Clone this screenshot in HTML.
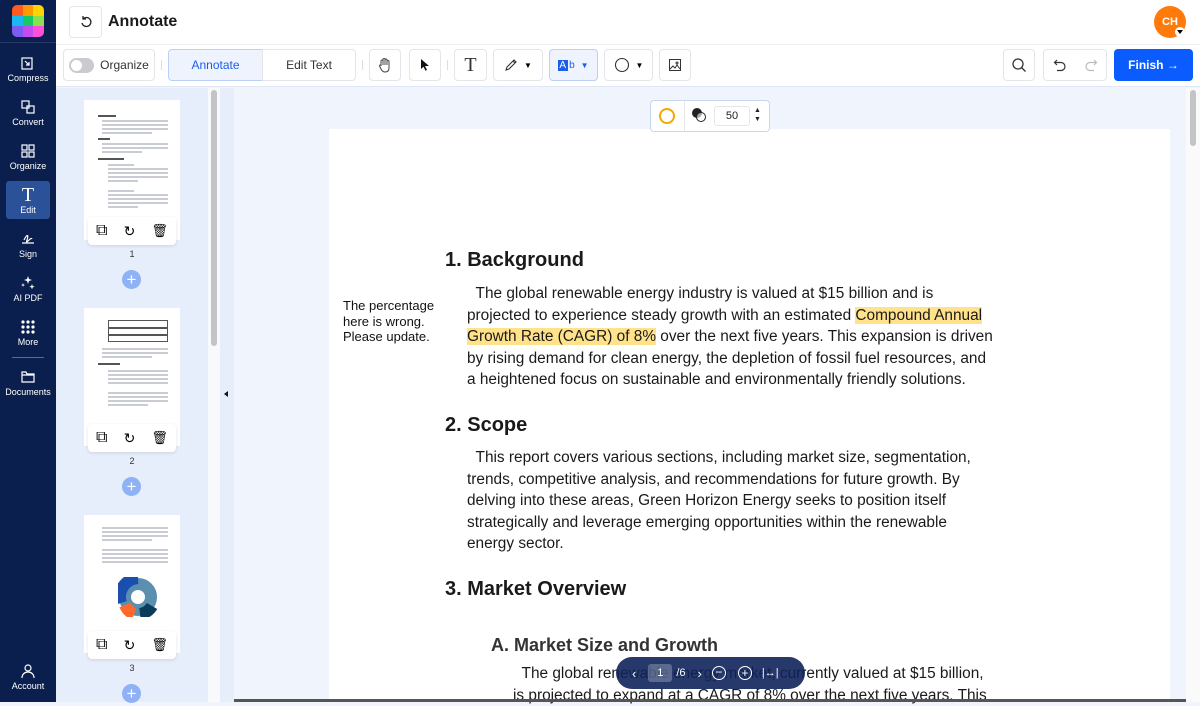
<!DOCTYPE html>
<html><head><meta charset="utf-8"><style>
*{margin:0;padding:0;box-sizing:border-box}
body{width:1200px;height:702px;overflow:hidden;font-family:"Liberation Sans",sans-serif;background:#f0f4fc;position:relative}
.a{position:absolute}
#side{left:0;top:0;width:56px;height:702px;background:#0a1f4d}
.si{position:absolute;left:0;width:56px;text-align:center;color:#fff;font-size:9px}
.si svg{display:block;margin:0 auto 2px}
.btn{position:absolute;border:1px solid #e2e5ea;border-radius:4px;background:#fff;display:flex;align-items:center;justify-content:center}
.thumb{position:absolute;left:84px;width:96px;background:#fff}
.ln{position:absolute;height:1.5px;background:#c9ccd2}
.bar{position:absolute;left:88px;width:88px;height:28px;background:#fff;border-radius:4px;box-shadow:0 1px 3px rgba(0,0,0,.12);display:flex;justify-content:space-around;align-items:center}
.num{position:absolute;left:126px;width:12px;text-align:center;font-size:9px;color:#333}
.plus{position:absolute;left:122px;width:19px;height:19px;border-radius:50%;background:#8fb1f5;color:#fff;font-size:17px;line-height:19px;text-align:center}
.doc{font-size:15.4px;color:#1a1a1a;line-height:21.5px;white-space:nowrap}
h2{position:absolute;font-size:20px;font-weight:bold;color:#1a1a1a}
</style></head><body>
<div id="side" class="a">
 <div class="a" style="left:12px;top:5px;width:32px;height:32px;border-radius:5px;overflow:hidden;display:grid;grid-template-columns:repeat(3,1fr)">
  <i style="background:#ff5a1f"></i><i style="background:#ff9a00"></i><i style="background:#ffd400"></i>
  <i style="background:#19b8f0"></i><i style="background:#17c964"></i><i style="background:#8be04e"></i>
  <i style="background:#7b5cf0"></i><i style="background:#c34cf0"></i><i style="background:#ff4fd8"></i>
 </div>
 <div class="a" style="left:0;top:42px;width:56px;height:1px;background:#26396a"></div>
 <div class="si" style="top:55px"><svg width="16" height="16" viewBox="0 0 16 16" fill="none" stroke="#fff" stroke-width="1.2"><rect x="2" y="3" width="10" height="11"/><path d="M5 6l4 4M9 7v3H6"/></svg>Compress</div>
 <div class="si" style="top:99px"><svg width="16" height="16" viewBox="0 0 16 16" fill="none" stroke="#fff" stroke-width="1.2"><rect x="2" y="2" width="7" height="7"/><rect x="7" y="7" width="7" height="7"/></svg>Convert</div>
 <div class="si" style="top:143px"><svg width="16" height="16" viewBox="0 0 16 16" fill="none" stroke="#fff" stroke-width="1.2"><rect x="2" y="2" width="5" height="5"/><rect x="9" y="2" width="5" height="5"/><rect x="2" y="9" width="5" height="5"/><rect x="9" y="9" width="5" height="5"/></svg>Organize</div>
 <div class="a" style="left:6px;top:181px;width:44px;height:38px;background:#2b5199;border-radius:3px"></div>
 <div class="si" style="top:186px;font-size:9px"><div style="font-family:'Liberation Serif',serif;font-size:20px;line-height:19px">T</div>Edit</div>
 <div class="si" style="top:231px"><svg width="16" height="16" viewBox="0 0 16 16" fill="none" stroke="#fff" stroke-width="1.2"><path d="M2 12h12M4 9c3-6 5-6 3 0s4-4 5-1"/></svg>Sign</div>
 <div class="si" style="top:275px"><svg width="16" height="16" viewBox="0 0 16 16" fill="#fff"><path d="M8 1l1 3 3 1-3 1-1 3-1-3-3-1 3-1zM12 9l.7 2 2 .7-2 .7-.7 2-.7-2-2-.7 2-.7zM3 8l.5 1.5L5 10l-1.5.5L3 12l-.5-1.5L1 10l1.5-.5z"/></svg>AI PDF</div>
 <div class="si" style="top:319px"><svg width="16" height="16" viewBox="0 0 16 16" fill="#fff"><circle cx="3" cy="3" r="1.6"/><circle cx="8" cy="3" r="1.6"/><circle cx="13" cy="3" r="1.6"/><circle cx="3" cy="8" r="1.6"/><circle cx="8" cy="8" r="1.6"/><circle cx="13" cy="8" r="1.6"/><circle cx="3" cy="13" r="1.6"/><circle cx="8" cy="13" r="1.6"/><circle cx="13" cy="13" r="1.6"/></svg>More</div>
 <div class="a" style="left:12px;top:357px;width:32px;height:1px;background:#5a6b90"></div>
 <div class="si" style="top:369px"><svg width="16" height="16" viewBox="0 0 16 16" fill="none" stroke="#fff" stroke-width="1.2"><path d="M2 3h4l1 2h7v8H2zM2 6h12"/></svg>Documents</div>
 <div class="si" style="top:663px"><svg width="16" height="16" viewBox="0 0 16 16" fill="none" stroke="#fff" stroke-width="1.2"><circle cx="8" cy="5" r="3"/><path d="M2 15c0-4 3-6 6-6s6 2 6 6"/></svg>Account</div>
</div>
<div class="a" style="left:56px;top:0;width:1144px;height:44px;background:#fff"></div>
<div class="btn" style="left:69px;top:6px;width:33px;height:32px"><svg width="14" height="14" viewBox="0 0 14 14" fill="none" stroke="#222" stroke-width="1.3"><path d="M4 4a4.5 4.5 0 1 1-1 4"/><path d="M4 1v3h3" /></svg></div>
<div class="a" style="left:108px;top:13px;font-size:16px;font-weight:bold;color:#1a1a1a">Annotate</div>
<div class="a" style="left:1154px;top:6px;width:32px;height:32px;border-radius:50%;background:#ff7a0a;color:#fff;font-size:11px;font-weight:bold;line-height:32px;text-align:center">CH</div>
<div class="a" style="left:1175px;top:27px;width:10px;height:10px;border-radius:50%;background:#fff"></div>
<div class="a" style="left:1177px;top:30px;border:3px solid transparent;border-top:4px solid #000"></div>
<div class="a" style="left:56px;top:44px;width:1144px;height:43px;background:#fff;border-top:1px solid #eef0f3;border-bottom:1px solid #dfe6f4"></div>
<div class="btn" style="left:63px;top:49px;width:92px;height:32px"><div style="width:25px;height:15px;border-radius:8px;background:#c9cbd0;position:relative;margin-right:6px"><div style="position:absolute;left:2px;top:2px;width:11px;height:11px;border-radius:50%;background:#fff"></div></div><span style="font-size:12px;color:#333">Organize</span></div>
<div class="a" style="left:161px;top:60px;width:1px;height:10px;background:#ddd"></div>
<div class="btn" style="left:168px;top:49px;width:95px;height:32px;background:#eef3fd;border-color:#bcd0f4;border-radius:4px 0 0 4px;font-size:12px;color:#1d5ee8">Annotate</div>
<div class="btn" style="left:262px;top:49px;width:94px;height:32px;border-radius:0 4px 4px 0;font-size:12px;color:#333">Edit Text</div>
<div class="a" style="left:362px;top:60px;width:1px;height:10px;background:#ddd"></div>
<div class="btn" style="left:369px;top:49px;width:32px;height:32px"><svg width="14" height="16" viewBox="0 0 14 16" fill="none" stroke="#444" stroke-width="1"><path d="M3 9V4a1 1 0 0 1 2 0v4V2.5a1 1 0 0 1 2 0V8V3a1 1 0 0 1 2 0v5V4.5a1 1 0 0 1 2 0V11c0 3-2 4-4 4s-3-1-4-3L1.5 9a1 1 0 0 1 1.5-1z"/></svg></div>
<div class="btn" style="left:409px;top:49px;width:32px;height:32px"><svg width="12" height="14" viewBox="0 0 12 14"><path d="M2 1l8 7H6l2 4-1.5.7-2-4L2 11z" fill="#111"/></svg></div>
<div class="a" style="left:447px;top:60px;width:1px;height:10px;background:#ddd"></div>
<div class="btn" style="left:454px;top:49px;width:33px;height:32px"><span style="font-family:'Liberation Serif',serif;font-size:20px;color:#333">T</span></div>
<div class="btn" style="left:493px;top:49px;width:50px;height:32px"><svg width="14" height="14" viewBox="0 0 14 14" fill="none" stroke="#333" stroke-width="1.1"><path d="M2 12l1-3 7-7 2 2-7 7zM9 3l2 2"/></svg><span style="font-size:8px;margin-left:6px">▼</span></div>
<div class="btn" style="left:549px;top:49px;width:49px;height:32px;background:#eef3fd;border-color:#bcd0f4"><span style="background:#1d5ee8;color:#fff;font-size:10px;padding:0 1px">A</span><span style="color:#1d5ee8;font-size:10px;border-left:1px solid #1d5ee8;padding-left:1px">b</span><span style="font-size:8px;margin-left:6px;color:#1d5ee8">▼</span></div>
<div class="btn" style="left:604px;top:49px;width:49px;height:32px"><svg width="16" height="16"><circle cx="8" cy="8" r="6.5" fill="none" stroke="#333" stroke-width="1.1"/></svg><span style="font-size:8px;margin-left:6px">▼</span></div>
<div class="btn" style="left:659px;top:49px;width:32px;height:32px"><svg width="14" height="14" viewBox="0 0 14 14" fill="none" stroke="#333" stroke-width="1"><rect x="1.5" y="1.5" width="11" height="11"/><path d="M2 11l3-3 2 2 2-3 3 4"/><circle cx="9" cy="5" r="1"/></svg></div>
<div class="btn" style="left:1003px;top:49px;width:32px;height:32px"><svg width="16" height="16" fill="none" stroke="#333" stroke-width="1.3"><circle cx="7" cy="7" r="5"/><path d="M10.5 10.5l4 4"/></svg></div>
<div class="btn" style="left:1043px;top:49px;width:64px;height:32px;justify-content:space-around"><svg width="14" height="14" fill="none" stroke="#333" stroke-width="1.2"><path d="M4 2L1.5 4.5 4 7"/><path d="M2 4.5h6a4 4 0 0 1 0 8H4"/></svg><svg width="14" height="14" fill="none" stroke="#bbb" stroke-width="1.2"><path d="M10 2l2.5 2.5L10 7"/><path d="M12 4.5H6a4 4 0 0 0 0 8h4"/></svg></div>
<div class="a" style="left:1114px;top:49px;width:79px;height:32px;background:#0a5cff;border-radius:4px;color:#fff;font-size:12px;font-weight:bold;line-height:32px;text-align:center">Finish →</div>
<div class="a" style="left:56px;top:88px;width:152px;height:614px;background:#e6eefc"></div>
<div class="a" style="left:208px;top:88px;width:12px;height:614px;background:#f8f9fb"></div>
<div class="a" style="left:211px;top:90px;width:6px;height:256px;background:#c2c4c8;border-radius:3px"></div>
<div class="a" style="left:220px;top:88px;width:14px;height:614px;background:#e6eefc"></div>
<div class="a" style="left:224px;top:391px;border:3px solid transparent;border-right:4px solid #111;border-left:0"></div>
<div class="thumb" style="top:100px;height:140px">
 <div class="ln" style="left:14px;top:15px;width:18px;background:#555"></div>
 <div class="ln" style="left:18px;top:20px;width:66px"></div><div class="ln" style="left:18px;top:24px;width:66px"></div><div class="ln" style="left:18px;top:28px;width:66px"></div><div class="ln" style="left:18px;top:32px;width:50px"></div>
 <div class="ln" style="left:14px;top:38px;width:12px;background:#555"></div>
 <div class="ln" style="left:18px;top:43px;width:66px"></div><div class="ln" style="left:18px;top:47px;width:66px"></div><div class="ln" style="left:18px;top:51px;width:40px"></div>
 <div class="ln" style="left:14px;top:58px;width:26px;background:#555"></div>
 <div class="ln" style="left:24px;top:64px;width:26px"></div><div class="ln" style="left:24px;top:68px;width:60px"></div><div class="ln" style="left:24px;top:72px;width:60px"></div><div class="ln" style="left:24px;top:76px;width:60px"></div><div class="ln" style="left:24px;top:80px;width:30px"></div>
 <div class="ln" style="left:24px;top:90px;width:26px"></div><div class="ln" style="left:24px;top:94px;width:60px"></div><div class="ln" style="left:24px;top:98px;width:60px"></div><div class="ln" style="left:24px;top:102px;width:60px"></div><div class="ln" style="left:24px;top:106px;width:30px"></div>
</div>
<div class="bar" style="top:217px">⧉<span style="font-size:14px">↻</span><span style="font-size:13px">🗑</span></div>
<div class="num" style="top:249px">1</div>
<div class="plus" style="top:270px">+</div>
<div class="thumb" style="top:308px;height:138px">
 <div class="a" style="left:24px;top:12px;width:60px;height:22px;border:1px solid #555"></div>
 <div class="ln" style="left:24px;top:19px;width:60px;background:#555"></div><div class="ln" style="left:24px;top:26px;width:60px;background:#555"></div>
 <div class="ln" style="left:18px;top:40px;width:66px"></div><div class="ln" style="left:18px;top:44px;width:66px"></div><div class="ln" style="left:18px;top:48px;width:50px"></div>
 <div class="ln" style="left:14px;top:55px;width:22px;background:#555"></div>
 <div class="ln" style="left:24px;top:62px;width:60px"></div><div class="ln" style="left:24px;top:66px;width:60px"></div><div class="ln" style="left:24px;top:70px;width:60px"></div><div class="ln" style="left:24px;top:74px;width:60px"></div>
 <div class="ln" style="left:24px;top:84px;width:60px"></div><div class="ln" style="left:24px;top:88px;width:60px"></div><div class="ln" style="left:24px;top:92px;width:60px"></div><div class="ln" style="left:24px;top:96px;width:40px"></div>
</div>
<div class="bar" style="top:424px">⧉<span style="font-size:14px">↻</span><span style="font-size:13px">🗑</span></div>
<div class="num" style="top:456px">2</div>
<div class="plus" style="top:477px">+</div>
<div class="thumb" style="top:515px;height:138px">
 <div class="ln" style="left:18px;top:12px;width:66px"></div><div class="ln" style="left:18px;top:16px;width:66px"></div><div class="ln" style="left:18px;top:20px;width:66px"></div><div class="ln" style="left:18px;top:24px;width:50px"></div>
 <div class="ln" style="left:18px;top:34px;width:66px"></div><div class="ln" style="left:18px;top:38px;width:66px"></div><div class="ln" style="left:18px;top:42px;width:66px"></div><div class="ln" style="left:18px;top:46px;width:66px"></div>
 <svg class="a" style="left:34px;top:62px" width="40" height="40" viewBox="0 0 40 40"><circle cx="20" cy="20" r="13" fill="none" stroke="#5a8fb0" stroke-width="12"/><path d="M20 1A19 19 0 0 0 3 26" fill="none" stroke="#1a4fb0" stroke-width="12"/><path d="M7 28a16 16 0 0 0 9 9" stroke="#ff6a2b" stroke-width="12" fill="none"/><path d="M22 37a16 16 0 0 0 12-8" stroke="#0d3b5a" stroke-width="12" fill="none"/></svg>
</div>
<div class="bar" style="top:631px">⧉<span style="font-size:14px">↻</span><span style="font-size:13px">🗑</span></div>
<div class="num" style="top:663px">3</div>
<div class="plus" style="top:684px">+</div>
<div class="a" style="left:1186px;top:88px;width:14px;height:614px;background:#fafafa"></div>
<div class="a" style="left:1190px;top:90px;width:6px;height:56px;background:#c2c4c8;border-radius:3px"></div>
<div class="a" style="left:329px;top:129px;width:841px;height:573px;background:#fff"></div>
<div class="a" style="left:650px;top:100px;width:120px;height:32px;background:#fff;border:1px solid #c9d6f2;border-radius:4px"></div>
<div class="a" style="left:684px;top:101px;width:1px;height:30px;background:#e3e6ec"></div>
<div class="a" style="left:659px;top:108px;width:16px;height:16px;border:2px solid #f5a800;border-radius:50%"></div>
<div class="a" style="left:692px;top:108px;width:10px;height:10px;border-radius:50%;background:#222"></div>
<div class="a" style="left:696px;top:112px;width:10px;height:10px;border-radius:50%;border:1px solid #222;background:rgba(255,255,255,.6)"></div>
<div class="a" style="left:714px;top:106px;width:36px;height:20px;border:1px solid #e3e6ec;border-radius:3px;font-size:11px;text-align:center;line-height:18px;color:#222">50</div>
<div class="a" style="left:754px;top:106px;font-size:7px;line-height:9px;color:#222">▲<br>▼</div>
<div class="a" style="left:343px;top:298px;font-size:13px;line-height:15.5px;color:#111">The percentage<br>here is wrong.<br>Please update.</div>
<h2 style="left:445px;top:249px">1. Background</h2>
<div class="a doc" style="left:467px;top:283px">&nbsp;&nbsp;The global renewable energy industry is valued at $15 billion and is<br>projected to experience steady growth with an estimated <span style="background:#ffe28a">Compound Annual</span><br><span style="background:#ffe28a">Growth Rate (CAGR) of 8%</span> over the next five years. This expansion is driven<br>by rising demand for clean energy, the depletion of fossil fuel resources, and<br>a heightened focus on sustainable and environmentally friendly solutions.</div>
<h2 style="left:445px;top:414px">2. Scope</h2>
<div class="a doc" style="left:467px;top:447px">&nbsp;&nbsp;This report covers various sections, including market size, segmentation,<br>trends, competitive analysis, and recommendations for future growth. By<br>delving into these areas, Green Horizon Energy seeks to position itself<br>strategically and leverage emerging opportunities within the renewable<br>energy sector.</div>
<h2 style="left:445px;top:578px">3. Market Overview</h2>
<div class="a" style="left:491px;top:635px;font-size:18px;font-weight:bold;color:#333">A. Market Size and Growth</div>
<div class="a doc" style="left:513px;top:663px">&nbsp;&nbsp;The global renewable energy market, currently valued at $15 billion,<br>is projected to expand at a CAGR of 8% over the next five years. This</div>
<div class="a" style="left:616px;top:657px;width:189px;height:32px;background:rgba(14,35,90,.9);border-radius:16px;color:#fff;font-size:13px;display:flex;align-items:center">
 <span style="margin-left:16px">‹</span>
 <span style="margin-left:12px;width:24px;height:18px;background:rgba(255,255,255,.25);border-radius:3px;text-align:center;line-height:18px;font-size:11px">1</span>
 <span style="margin-left:4px;font-size:11px">/6</span>
 <span style="margin-left:12px">›</span>
 <span style="margin-left:10px;width:14px;height:14px;border:1.3px solid #fff;border-radius:50%;text-align:center;line-height:11px;font-size:12px">−</span>
 <span style="margin-left:12px;width:14px;height:14px;border:1.3px solid #fff;border-radius:50%;text-align:center;line-height:12px;font-size:12px">+</span>
 <span style="margin-left:10px;font-size:11px">|↔|</span>
</div>
<div class="a" style="left:234px;top:699px;width:952px;height:3px;background:#555"></div>
</body></html>
